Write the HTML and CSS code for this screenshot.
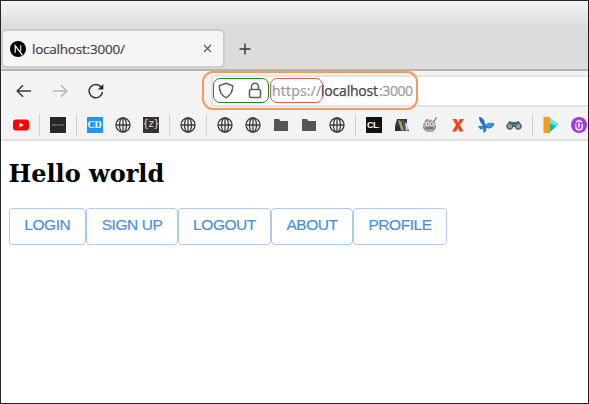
FILE: index.html
```html
<!DOCTYPE html>
<html lang="en">
<head>
<meta charset="utf-8">
<title>localhost:3000/</title>
<link rel="stylesheet" href="styles.css">
</head>
<body>
<svg class="defs" width="0" height="0">
  <symbol id="globe" viewBox="0 0 16 16"><g fill="none" stroke="#3c3c3c" stroke-width="1.3"><circle cx="8" cy="8" r="7"/><ellipse cx="8" cy="8" rx="3.5" ry="7"/><path d="M8 1v14M1 8h14"/></g></symbol>
  <symbol id="folder" viewBox="0 0 16 16"><path d="M1 2h5l1.5 2H15v10H1z" fill="#555"/></symbol>
</svg>
<div class="window">
  <header class="tabs">
    <div class="tab">
      <svg class="favicon" width="16" height="16" viewBox="0 0 16 16"><circle cx="8" cy="8" r="8" fill="#000"/><path d="M5.2 11.7V4.7L12.4 14" fill="none" stroke="#eee" stroke-width="1.3"/><path d="M10.7 4.2v6" stroke="#ccc" stroke-width="1.3"/></svg>
      <span class="tab-title">localhost:3000/</span>
      <svg class="close" width="9" height="9" viewBox="0 0 9 9"><path d="M1 1l7 7M8 1L1 8" stroke="#555" stroke-width="1.1"/></svg>
    </div>
    <svg class="plus" width="12" height="12" viewBox="0 0 12 12"><path d="M6 .5v11M.5 6h11" stroke="#333" stroke-width="1.4"/></svg>
  </header>
  <nav class="toolbar">
    <svg class="back" width="16" height="14" viewBox="0 0 16 14"><path d="M15 7H1.5M7 1.2L1.2 7 7 12.8" fill="none" stroke="#3b3b3b" stroke-width="1.5"/></svg>
    <svg class="forward" width="16" height="14" viewBox="0 0 16 14"><path d="M1 7h13.5M9 1.2L14.8 7 9 12.8" fill="none" stroke="#b5b5b5" stroke-width="1.5"/></svg>
    <svg class="reload" width="16" height="16" viewBox="0 0 16 16"><path d="M13.3 4.2A6.7 6.7 0 1 0 14.5 8.8" fill="none" stroke="#3b3b3b" stroke-width="1.5"/><path d="M15.3 1v5.4H9.9z" fill="#222"/></svg>
    <div class="url">
      <div class="highlight"></div>
      <div class="badges">
        <svg width="16" height="17" viewBox="0 0 16 17"><path d="M8 1.2L14.7 3.7C14.8 9.5 12.6 13.2 8 15.8 3.4 13.2 1.2 9.5 1.3 3.7Z" fill="none" stroke="#606060" stroke-width="1.5" stroke-linejoin="round"/></svg>
        <svg width="14" height="17" viewBox="0 0 14 17"><rect x="1.5" y="7.5" width="11" height="8" rx="1.5" fill="none" stroke="#606060" stroke-width="1.6"/><path d="M3.5 7.5V4.8a3.5 3.5 0 0 1 7 0v2.7" fill="none" stroke="#606060" stroke-width="1.6"/></svg>
      </div>
      <span class="scheme">https://</span><span class="host">localhost</span><span class="port">:3000</span>
    </div>
  </nav>
  <div class="bookmarks">
    <svg viewBox="0 0 16 16"><rect y="2.5" width="16" height="11" rx="3" fill="#f00"/><path d="M6.3 5.5v5L10.8 8z" fill="#fff"/></svg>
    <i></i>
    <svg viewBox="0 0 16 16"><rect width="16" height="16" fill="#282725"/><path d="M2 8h4" stroke="#777" stroke-width="2" stroke-dasharray="1.3 .6"/><path d="M6.5 8h8" stroke="#80652e" stroke-width="2" stroke-dasharray="1.4 .6"/></svg>
    <i></i>
    <span class="site cd">CD</span>
    <svg><use href="#globe"/></svg>
    <span class="site z">{z}</span>
    <i></i>
    <svg><use href="#globe"/></svg>
    <i></i>
    <svg><use href="#globe"/></svg>
    <svg><use href="#globe"/></svg>
    <svg><use href="#folder"/></svg>
    <svg><use href="#folder"/></svg>
    <svg><use href="#globe"/></svg>
    <i></i>
    <span class="site cl">CL<b>.</b></span>
    <svg viewBox="0 0 16 16"><path d="M3 2h10v7l2 5H1V9z" fill="#35383d"/><path d="M1 10l5-1 1 5H1z" fill="#1c2a48"/><path d="M4 3l3 1 3 10-3-1z" fill="#c79a4c"/><path d="M8 3h2l2 10h-2z" fill="#315d9c"/><path d="M11 5l2 2 1 6-2 1z" fill="#e4dcc2"/></svg>
    <svg viewBox="0 0 16 16"><path d="M1.5 6l3-3 5-.5 4 4v5l-3 3.5H5l-4-4z" fill="#aaa6a3"/><path d="M11 6l3.5-5.5" stroke="#444"/><circle cx="5.5" cy="7" r="2" fill="#eee"/><circle cx="10" cy="7" r="2" fill="#e8e8e8"/><circle cx="5.7" cy="7" r=".8" fill="#333"/><circle cx="9.8" cy="7" r=".8" fill="#333"/><path d="M4 11h7" stroke="#8b4d4d" stroke-width="1.5"/><path d="M1 10l3 4M14 9l-3 5M3 4l3-2" stroke="#777"/></svg>
    <svg viewBox="0 0 16 16"><path d="M2.5 2h4L8 5.5 10 2h4l-4 6 3.5 6.5h-4L8 11l-2 3.5H2L6 8z" fill="#e74b1c"/></svg>
    <svg viewBox="0 0 16 16"><path d="M1.5 0C5 1 6.5 4 7 9 4 8 1.5 4 1.500 0z" fill="#1678dd" stroke="#113b87" stroke-width=".6"/><path d="M7 9c2-3 6-3.500 9-2-1 3-4 5-8 3.500z" fill="#20a1ee" stroke="#134b9d" stroke-width=".7"/><path d="M7 9L.5 9.500l2 2.500 3-1 .5 4.500 2-2z" fill="#1593e9" stroke="#123c82" stroke-width=".6"/></svg>
    <svg viewBox="0 0 16 16"><path d="M3 4l4 1h2l4-1 3 6H0z" fill="#536774"/><circle cx="3.8" cy="9.3" r="2.8" fill="#7faac3" stroke="#4a5963" stroke-width="1.2"/><circle cx="12.2" cy="9.3" r="2.8" fill="#7faac3" stroke="#4a5963" stroke-width="1.2"/></svg>
    <i></i>
    <svg viewBox="0 0 16 16"><path d="M.5 0H7v16H.5z" fill="#fb9b16"/><path d="M7 1l9 6-3 2-6-3z" fill="#6ee5d5"/><path d="M7 6l6 3 3-2-9 8z" fill="#13b9b5"/></svg>
    <svg viewBox="0 0 16 16"><circle cx="8" cy="8" r="8" fill="#a435e9"/><path d="M4.7 6.8v3a3.3 2.9 0 0 0 6.6 0v-3M5 5.2L8 3.3l3 1.9M8 5.5v5" fill="none" stroke="#fff" stroke-width="1.4"/></svg>
  </div>
  <main>
    <h1>Hello world</h1>
    <div class="buttons">
      <button class="w-login">LOGIN</button><button class="w-signup">SIGN UP</button><button class="w-logout">LOGOUT</button><button class="w-about">ABOUT</button><button class="w-profile">PROFILE</button>
    </div>
  </main>
</div>
</body>
</html>
```
FILE: styles.css
```css
* { box-sizing: border-box; }
body { margin: 0; }
.defs { display: block; }
.window {
  width: 589px;
  height: 404px;
  border: 1px solid #252326;
  background: #fff;
  overflow: hidden;
  font-family: "Open Sans", "Noto Sans", sans-serif;
}
svg { flex: none; display: block; }
.tabs {
  height: 70px;
  padding: 29px 0 0 1px;
  display: flex;
  align-items: flex-start;
  background: linear-gradient(#f6f4f6 0, #dcdcdc 26px);
  border-bottom: 2px solid #b4b4b4;
}
.tab {
  width: 222px;
  height: 37px;
  padding: 0 11px 0 7px;
  display: flex;
  align-items: center;
  background: #f5f5f5;
  border: 1px solid #ccc;
  border-radius: 4px;
  box-shadow: 0 0 2px #aaa;
}
.tab-title {
  margin-left: 6px;
  flex: 1;
  font-size: 13.5px;
  line-height: 18px;
  letter-spacing: -0.22px;
  color: #444;
  -webkit-text-stroke: 0.2px #444;
}
.plus { margin: 13px 0 0 15px; }
.toolbar {
  height: 40px;
  padding-left: 15px;
  display: flex;
  align-items: center;
  background: #f3f3f3;
}
.forward { margin-left: 20px; }
.reload { margin-left: 20px; }
.url {
  position: relative;
  width: 400px;
  height: 32px;
  margin: -1px 0 0 107px;
  padding-left: 2px;
  display: flex;
  flex: none;
  align-items: center;
  background: #fff;
  border: 2px solid #e4e4e4;
  border-radius: 4px;
  font-size: 14px;
  line-height: 20px;
  color: #999;
}
.highlight {
  position: absolute;
  left: -11px;
  top: -6px;
  width: 216px;
  height: 39px;
  border: 2px solid #f79a58;
  border-radius: 11px;
}
.badges {
  width: 56px;
  height: 25px;
  margin-left: -2px;
  display: flex;
  flex: none;
  align-items: center;
  justify-content: space-between;
  padding: 0 6px 0 4px;
  border: 1.5px solid #198b19;
  border-radius: 7px;
}
.scheme {
  width: 53px;
  height: 25px;
  margin-left: 1px;
  padding-left: 1px;
  flex: none;
  border: 1px solid #ed5353;
  border-radius: 7px;
  line-height: 23px;
  letter-spacing: 0.2px;
  -webkit-text-stroke: 0.2px #999;
}
.host { width: 58px; margin-left: -2px; color: #444; letter-spacing: -0.2px; -webkit-text-stroke: 0.25px #444; }
.port { letter-spacing: -0.4px; -webkit-text-stroke: 0.2px #999; }
.bookmarks {
  height: 30px;
  padding-left: 11.5px;
  display: flex;
  align-items: center;
  gap: 12px;
  background: #f3f3f3;
  border-bottom: 2px solid #e0e0e0;
}
.bookmarks svg { width: 16px; height: 16px; }
.bookmarks i { width: 1px; height: 22px; margin: 0 -2px; flex: none; background: #d3d3d3; }
.site {
  width: 16px;
  height: 16px;
  flex: none;
  text-align: center;
  line-height: 16px;
  color: #fff;
}
.cd { background: #2196f3; font: bold 10px/16px "Liberation Serif", serif; letter-spacing: -0.3px; }
.z { background: #333; color: #ddd; font: 10px/14px "DejaVu Sans", sans-serif; letter-spacing: -0.4px; }
.cl { background: #111; font: bold 9px/16px "Liberation Sans", sans-serif; letter-spacing: -0.5px; }
.cl b { color: #e31b68; }
main { padding: 18px 0 0 7.5px; }
h1 {
  margin: 0;
  font: bold 24px/30px "DejaVu Serif", serif;
  color: #000;
}
.buttons { display: flex; margin-top: 19px; }
button {
  height: 37px;
  padding: 0 0 3px;
  background: #fff;
  border: 1.5px solid #a9cbee;
  border-radius: 4px;
  font: 15.5px/20px "Liberation Sans", Arial, sans-serif;
  letter-spacing: -0.45px;
  color: #4a90d9;
  -webkit-text-stroke: 0.2px #4a90d9;
}
.w-login { width: 77.5px; }
.w-signup { width: 92px; }
.w-logout { width: 93px; }
.w-about { width: 82px; }
.w-profile { width: 94px; }
```
